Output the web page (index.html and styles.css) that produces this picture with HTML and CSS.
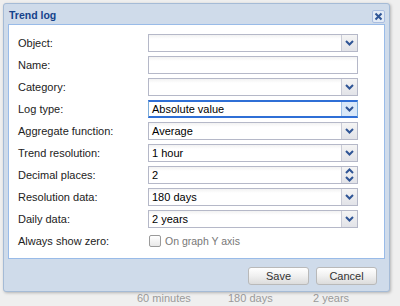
FILE: index.html
```html
<!DOCTYPE html>
<html lang="en">
<head>
    <meta charset="UTF-8">
    <title>Trend log</title>
    <link rel="stylesheet" href="styles.css">
</head>
<body>

    <div class="backdrop">
        <div class="behind-row">
            <span class="c1">60 minutes</span>
            <span class="c2">180 days</span>
            <span class="c3">2 years</span>
        </div>
    </div>

    <div class="window">
        <div class="header">
            <span class="title">Trend log</span>
            <span class="close">
                <svg width="9" height="9" viewBox="0 0 9 9"><path d="M1.5 1.5 L7.5 7.5 M7.5 1.5 L1.5 7.5" stroke="#2f5596" stroke-width="2"/></svg>
            </span>
        </div>

        <div class="form">
            <div class="row">
                <label>Object:</label>
                <div class="field combo"><span class="val"></span><span class="trigger"><svg width="9" height="6" viewBox="0 0 9 6"><path d="M1 1 L4.5 4.5 L8 1" fill="none" stroke="#2f5596" stroke-width="2"/></svg></span></div>
            </div>
            <div class="row">
                <label>Name:</label>
                <div class="field"><span class="val"></span></div>
            </div>
            <div class="row">
                <label>Category:</label>
                <div class="field combo"><span class="val"></span><span class="trigger"><svg width="9" height="6" viewBox="0 0 9 6"><path d="M1 1 L4.5 4.5 L8 1" fill="none" stroke="#2f5596" stroke-width="2"/></svg></span></div>
            </div>
            <div class="row">
                <label>Log type:</label>
                <div class="field combo focus"><span class="val">Absolute value</span><span class="trigger"><svg width="9" height="6" viewBox="0 0 9 6"><path d="M1 1 L4.5 4.5 L8 1" fill="none" stroke="#2f5596" stroke-width="2"/></svg></span></div>
            </div>
            <div class="row">
                <label>Aggregate function:</label>
                <div class="field combo"><span class="val">Average</span><span class="trigger"><svg width="9" height="6" viewBox="0 0 9 6"><path d="M1 1 L4.5 4.5 L8 1" fill="none" stroke="#2f5596" stroke-width="2"/></svg></span></div>
            </div>
            <div class="row">
                <label>Trend resolution:</label>
                <div class="field combo"><span class="val">1 hour</span><span class="trigger"><svg width="9" height="6" viewBox="0 0 9 6"><path d="M1 1 L4.5 4.5 L8 1" fill="none" stroke="#2f5596" stroke-width="2"/></svg></span></div>
            </div>
            <div class="row">
                <label>Decimal places:</label>
                <div class="field combo"><span class="val">2</span><span class="trigger spin"><svg width="9" height="14" viewBox="0 0 9 14"><path d="M1 5 L4.5 1.5 L8 5 M1 9 L4.5 12.5 L8 9" fill="none" stroke="#2f5596" stroke-width="2"/></svg></span></div>
            </div>
            <div class="row">
                <label>Resolution data:</label>
                <div class="field combo"><span class="val">180 days</span><span class="trigger"><svg width="9" height="6" viewBox="0 0 9 6"><path d="M1 1 L4.5 4.5 L8 1" fill="none" stroke="#2f5596" stroke-width="2"/></svg></span></div>
            </div>
            <div class="row">
                <label>Daily data:</label>
                <div class="field combo"><span class="val">2 years</span><span class="trigger"><svg width="9" height="6" viewBox="0 0 9 6"><path d="M1 1 L4.5 4.5 L8 1" fill="none" stroke="#2f5596" stroke-width="2"/></svg></span></div>
            </div>
            <div class="row">
                <label>Always show zero:</label>
                <div class="check"><span class="box"></span><span class="check-label">On graph Y axis</span></div>
            </div>
        </div>

        <div class="footer">
            <button class="btn">Save</button>
            <button class="btn">Cancel</button>
        </div>
    </div>

</body>
</html>
```

FILE: styles.css
```css
body {
    margin: 0;
    background-color: #ececec;
    font-family: "Liberation Sans", Arial, sans-serif;
    font-size: 11px;
    color: #222;
    width: 400px;
    height: 306px;
    overflow: hidden;
    position: relative;
}
.backdrop {
    position: absolute;
    left: 0;
    top: 0;
    width: 400px;
    height: 306px;
    background-color: #efefef;
}
.behind-row {
    position: absolute;
    left: 0;
    top: 292px;
    width: 400px;
    color: #9a9a9a;
    font-size: 11px;
}
.behind-row span {
    position: absolute;
    top: 0;
}
.c1 { left: 137px; }
.c2 { left: 228px; }
.c3 { left: 313px; }
.window {
    position: absolute;
    left: 3px;
    top: 3px;
    width: 385px;
    height: 287px;
    background-color: #cfdbea;
    border: 1px solid #a5bbd6;
    border-radius: 3px;
    box-shadow: 1px 1px 3px rgba(0, 0, 0, 0.25);
}
.header {
    height: 20px;
    display: flex;
    align-items: center;
    justify-content: space-between;
    padding: 0 4px 0 5px;
}
.title {
    font-weight: bold;
    font-size: 10.5px;
    color: #15428b;
    margin-top: 1px;
}
.close {
    width: 11px;
    height: 11px;
    border: 1px solid #a9bde0;
    border-radius: 2px;
    background-color: #e3ebf6;
    display: flex;
    align-items: center;
    justify-content: center;
    margin-top: 4px;
}
.form {
    margin: 0 4px;
    background-color: #fff;
    border: 1px solid #99bbe8;
    padding: 9px 9px 7px 9px;
    height: 217px;
}
.row {
    display: grid;
    grid-template-columns: 130px 210px;
    align-items: center;
    height: 18px;
    margin-bottom: 4px;
}
.row label {
    color: #222;
}
.field {
    height: 18px;
    box-sizing: border-box;
    border: 1px solid #b5b8c8;
    background: linear-gradient(#f2f2f2, #fff 4px);
    display: flex;
    align-items: stretch;
}
.val {
    flex: 1;
    padding-left: 3px;
    line-height: 16px;
    font-size: 11px;
    color: #000;
}
.trigger {
    width: 15px;
    border-left: 1px solid #c9cbd6;
    background: linear-gradient(#f4f4f4, #e2e3e8);
    display: flex;
    align-items: center;
    justify-content: center;
}
.focus {
    border: 1px solid #7eadd9;
    border-top: 2px solid #2f6fd6;
    border-bottom: 2px solid #2f6fd6;
    background: #fff;
}
.focus .val {
    line-height: 14px;
}
.focus .trigger {
    background: #d9e8f8;
    border-left-color: #9fc0e6;
}
.check {
    display: flex;
    align-items: center;
    padding-left: 1px;
}
.box {
    width: 10px;
    height: 10px;
    border: 1px solid #9a9a9a;
    border-radius: 2px;
    background: linear-gradient(#fff, #e8e8e8);
}
.check-label {
    margin-left: 4px;
    color: #777;
    font-size: 10.5px;
}
.footer {
    display: flex;
    justify-content: flex-end;
    gap: 7px;
    padding: 8px 12px 0 0;
}
.btn {
    width: 61px;
    height: 18px;
    border: 1px solid #b9b9b9;
    border-radius: 3px;
    background: linear-gradient(#ffffff, #f0f0f0 50%, #dcdcdc);
    font-family: "Liberation Sans", Arial, sans-serif;
    font-size: 11px;
    color: #333;
    padding: 0;
}
```
